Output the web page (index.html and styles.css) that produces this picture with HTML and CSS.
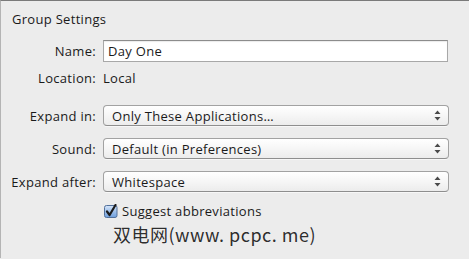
FILE: index.html
```html
<!DOCTYPE html>
<html lang="en">
<head>
  <meta charset="UTF-8">
  <title>Group Settings</title>
  <link rel="stylesheet" href="styles.css">
</head>
<body>
  <div class="panel">
    <div class="title">Group Settings</div>

    <div class="form">
      <div class="row row-name">
        <label class="label">Name:</label>
        <div class="textfield">Day One</div>
      </div>

      <div class="row row-location">
        <span class="label">Location:</span>
        <span class="value">Local</span>
      </div>

      <div class="row row-expand">
        <label class="label">Expand in:</label>
        <div class="popup">
          <span>Only These Applications…</span>
          <svg class="arrows" width="7" height="11" viewBox="0 0 7 11"><path d="M3.5 0.5 L6.5 4 L0.5 4 Z M3.5 10.5 L6.5 7 L0.5 7 Z" fill="#4a4a4a"/></svg>
        </div>
      </div>

      <div class="row row-popup">
        <label class="label">Sound:</label>
        <div class="popup">
          <span>Default (in Preferences)</span>
          <svg class="arrows" width="7" height="11" viewBox="0 0 7 11"><path d="M3.5 0.5 L6.5 4 L0.5 4 Z M3.5 10.5 L6.5 7 L0.5 7 Z" fill="#4a4a4a"/></svg>
        </div>
      </div>

      <div class="row row-popup">
        <label class="label">Expand after:</label>
        <div class="popup">
          <span>Whitespace</span>
          <svg class="arrows" width="7" height="11" viewBox="0 0 7 11"><path d="M3.5 0.5 L6.5 4 L0.5 4 Z M3.5 10.5 L6.5 7 L0.5 7 Z" fill="#4a4a4a"/></svg>
        </div>
      </div>

      <div class="row row-check">
        <span></span>
        <div class="check">
          <svg width="14" height="14" viewBox="0 0 14 14">
            <defs>
              <linearGradient id="cb" x1="0" y1="0" x2="0" y2="1">
                <stop offset="0" stop-color="#d6e6fa"/>
                <stop offset="0.5" stop-color="#9fc0ea"/>
                <stop offset="1" stop-color="#6f9fdc"/>
              </linearGradient>
            </defs>
            <rect x="0.5" y="1.5" width="12.5" height="12" rx="2" fill="url(#cb)" stroke="#52709a"/>
            <path d="M3 7.5 L5.6 11 L11.5 1" fill="none" stroke="#1c1c1c" stroke-width="2.2" stroke-linecap="round" stroke-linejoin="round"/>
          </svg>
          <span>Suggest abbreviations</span>
        </div>
      </div>
    </div>

    <div class="watermark">双电网(www. pcpc. me)</div>
  </div>
</body>
</html>
```

FILE: styles.css
```css
html, body {
  margin: 0;
  padding: 0;
  background: #ececec;
}

body {
  font-family: "Open Sans", "DejaVu Sans", sans-serif;
  font-size: 13px;
  letter-spacing: 0.3px;
  color: #1a1a1a;
}

.panel {
  height: 258px;
  border-top: 1px solid #7a7a7a;
  border-left: 1px solid #b4b4b4;
  padding-left: 11px;
  box-sizing: border-box;
}

.title {
  margin-top: 9px;
  height: 18px;
  line-height: 18px;
}

.form {
  margin-top: 12px;
}

.row {
  display: grid;
  grid-template-columns: 84px 346px;
  column-gap: 7px;
  align-items: center;
}

.label {
  display: flex;
  justify-content: flex-end;
  white-space: nowrap;
}

.row-name {
  height: 22px;
}

.row-location {
  height: 22px;
  margin-top: 5px;
}

.row-expand {
  height: 21px;
  margin-top: 16px;
}

.row-popup {
  height: 21px;
  margin-top: 12px;
}

.row-check {
  height: 16px;
  margin-top: 10px;
}

.textfield {
  height: 22px;
  width: 345px;
  box-sizing: border-box;
  background: #fff;
  border: 1px solid #a8a8a8;
  border-top-color: #8c8c8c;
  box-shadow: inset 0 1px 1px rgba(0, 0, 0, 0.08);
  padding-left: 4px;
  line-height: 20px;
}

.popup {
  height: 21px;
  box-sizing: border-box;
  display: flex;
  align-items: center;
  justify-content: space-between;
  padding: 0 7px 0 8px;
  border: 1px solid #a2a2a2;
  border-bottom-color: #8e8e8e;
  border-radius: 4px;
  background: linear-gradient(#ffffff, #f6f6f6 50%, #ececec);
  box-shadow: 0 1px 0 rgba(255, 255, 255, 0.6);
}

.arrows {
  display: block;
}

.check {
  display: flex;
  align-items: center;
  gap: 4px;
  margin-left: 1px;
}

.check svg {
  display: block;
}

.watermark {
  margin-top: 5px;
  margin-left: 101px;
  font-family: "Noto Sans CJK SC", sans-serif;
  font-size: 18px;
  line-height: 22px;
  letter-spacing: 0.5px;
  color: #2e2e2e;
  text-shadow: 0 0 1px #fff;
}
```
